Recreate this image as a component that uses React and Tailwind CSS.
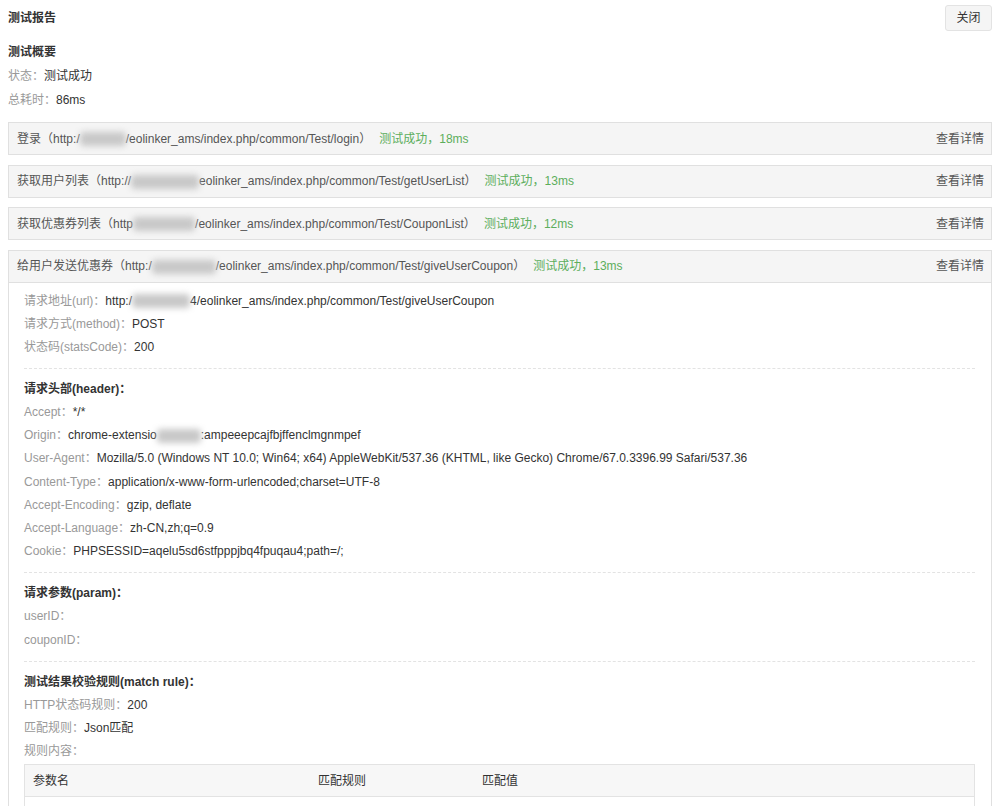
import React from "react";

const font = { fontFamily: '"Liberation Sans", Arial, "Noto Sans CJK SC", sans-serif' };

const Blur = ({ className }) => (
  <span className={`inline-block h-[14px] align-middle rounded-sm bg-[#c8c8c8] blur-[3px] ${className}`} />
);

const Line = ({ label, children }) => (
  <div className="h-[23.2px] leading-[23.2px] whitespace-nowrap">
    <span className="text-[#999]">{label}</span>
    <span className="text-[#333]">{children}</span>
  </div>
);

const Divider = ({ className }) => (
  <div className={`border-t border-dashed border-[#e3e3e3] ${className}`} />
);

const Section = ({ children, className }) => (
  <div className={`h-[24px] leading-[24px] font-bold text-[#333] ${className}`}>{children}</div>
);

const PanelHead = ({ name, pre, blur, rest, ms, border }) => (
  <div
    className={`flex items-center justify-between pl-[8px] pr-[7px] bg-[#f5f5f5] ${
      border ? "h-[32px] border-b border-[#e0e0e0]" : "h-[31px]"
    }`}
  >
    <div className="text-[#555] whitespace-nowrap">
      {name}（{pre}
      <Blur className={blur} />
      {rest}）
      <span className="ml-[8px] text-[#5cae5c]">测试成功，{ms}</span>
    </div>
    <span className="text-[#555]">查看详情</span>
  </div>
);

const rows = [
  { name: "登录", pre: "http:/", blur: "w-[46px]", rest: "/eolinker_ams/index.php/common/Test/login", ms: "18ms" },
  { name: "获取用户列表", pre: "http://", blur: "w-[68px]", rest: "eolinker_ams/index.php/common/Test/getUserList", ms: "13ms" },
  { name: "获取优惠券列表", pre: "http", blur: "w-[62px]", rest: "/eolinker_ams/index.php/common/Test/CouponList", ms: "12ms" },
];

export default function App() {
  return (
    <div className="bg-white text-[12px] pt-[5px] px-[8px] w-[1000px] h-[806px] overflow-hidden" style={font}>
      {/* title */}
      <div className="h-[26px] flex items-center justify-between">
        <span className="font-bold text-[#333]">测试报告</span>
        <button className="h-[26px] w-[47px] bg-[#f5f5f5] border border-[#e3e3e3] rounded-[3px] text-[#333]">
          关闭
        </button>
      </div>

      {/* summary */}
      <Section className="mt-[9px]">测试概要</Section>
      <div className="h-[24px] leading-[24px]">
        <span className="text-[#999]">状态：</span>
        <span className="text-[#333]">测试成功</span>
      </div>
      <div className="h-[24px] leading-[24px]">
        <span className="text-[#999]">总耗时：</span>
        <span className="text-[#333]">86ms</span>
      </div>

      {/* collapsed panels */}
      <div className="mt-[10px] flex flex-col gap-[9.5px]">
        {rows.map((r) => (
          <div key={r.name} className="border border-[#e0e0e0]">
            <PanelHead {...r} />
          </div>
        ))}

        {/* expanded panel */}
        <div className="border border-[#e0e0e0]">
          <PanelHead
            name="给用户发送优惠券"
            pre="http:/"
            blur="w-[64px]"
            rest="/eolinker_ams/index.php/common/Test/giveUserCoupon"
            ms="13ms"
            border
          />
          <div className="pl-[15px] pr-[16px] pt-[7px] pb-[20px]">
            <Line label="请求地址(url)：">
              http:/
              <Blur className="w-[58px]" />
              4/eolinker_ams/index.php/common/Test/giveUserCoupon
            </Line>
            <Line label="请求方式(method)：">POST</Line>
            <Line label="状态码(statsCode)：">200</Line>

            <Divider className="mt-[9px]" />
            <Section className="mt-[8px]">请求头部(header)：</Section>
            <Line label="Accept：">*/*</Line>
            <Line label="Origin：">
              chrome-extensio
              <Blur className="w-[44px]" />
              :ampeeepcajfbjffenclmgnmpef
            </Line>
            <Line label="User-Agent：">
              Mozilla/5.0 (Windows NT 10.0; Win64; x64) AppleWebKit/537.36 (KHTML, like Gecko) Chrome/67.0.3396.99 Safari/537.36
            </Line>
            <Line label="Content-Type：">application/x-www-form-urlencoded;charset=UTF-8</Line>
            <Line label="Accept-Encoding：">gzip, deflate</Line>
            <Line label="Accept-Language：">zh-CN,zh;q=0.9</Line>
            <Line label="Cookie：">PHPSESSID=aqelu5sd6stfpppjbq4fpuqau4;path=/;</Line>

            <Divider className="mt-[9px]" />
            <Section className="mt-[8px]">请求参数(param)：</Section>
            <Line label="userID：" />
            <Line label="couponID：" />

            <Divider className="mt-[9px]" />
            <Section className="mt-[8px]">测试结果校验规则(match rule)：</Section>
            <Line label="HTTP状态码规则：">200</Line>
            <Line label="匹配规则：">Json匹配</Line>
            <Line label="规则内容：" />

            {/* rule table */}
            <div className="mt-[1px] border border-[#e3e3e3]">
              <div className="grid grid-cols-[293px_164px_1fr] h-[32px] items-center bg-[#f7f7f7] border-b border-[#e3e3e3] text-[#333]">
                <span className="pl-[8px]">参数名</span>
                <span>匹配规则</span>
                <span>匹配值</span>
              </div>
              <div className="grid grid-cols-[293px_164px_1fr] h-[32px] items-center text-[#333]">
                <span className="pl-[24px]">statusCode</span>
                <span>等于[=]</span>
                <span>100001</span>
              </div>
            </div>
          </div>
        </div>
      </div>
    </div>
  );
}
